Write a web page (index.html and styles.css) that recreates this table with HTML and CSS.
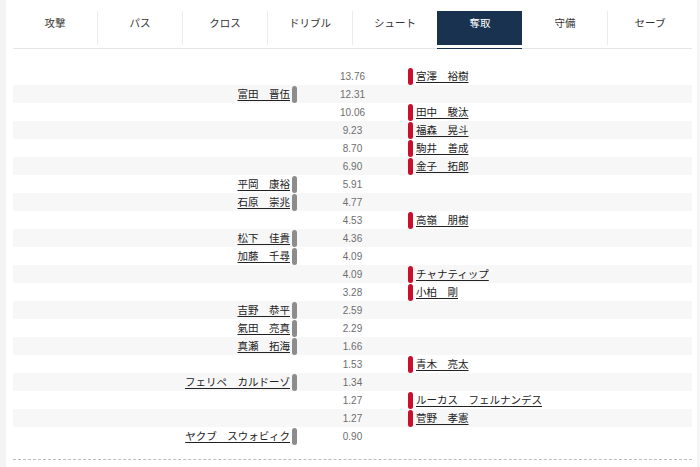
FILE: index.html
```html
<!DOCTYPE html>
<html lang="ja">
<head>
<meta charset="utf-8">
<title>奪取</title>
<link rel="stylesheet" href="styles.css">
</head>
<body>
<div class="page">
  <nav class="tabs">
    <div class="tab">攻撃</div>
    <div class="tab">パス</div>
    <div class="tab">クロス</div>
    <div class="tab">ドリブル</div>
    <div class="tab">シュート</div>
    <div class="tab active">奪取</div>
    <div class="tab">守備</div>
    <div class="tab">セーブ</div>
  </nav>
  <div class="table">
    <div class="row"><div class="home"></div><div class="val">13.76</div><div class="away"><span class="bar"></span><a class="name">宮澤　裕樹</a></div></div>
    <div class="row"><div class="home"><a class="name">富田　晋伍</a><span class="bar"></span></div><div class="val">12.31</div><div class="away"></div></div>
    <div class="row"><div class="home"></div><div class="val">10.06</div><div class="away"><span class="bar"></span><a class="name">田中　駿汰</a></div></div>
    <div class="row"><div class="home"></div><div class="val">9.23</div><div class="away"><span class="bar"></span><a class="name">福森　晃斗</a></div></div>
    <div class="row"><div class="home"></div><div class="val">8.70</div><div class="away"><span class="bar"></span><a class="name">駒井　善成</a></div></div>
    <div class="row"><div class="home"></div><div class="val">6.90</div><div class="away"><span class="bar"></span><a class="name">金子　拓郎</a></div></div>
    <div class="row"><div class="home"><a class="name">平岡　康裕</a><span class="bar"></span></div><div class="val">5.91</div><div class="away"></div></div>
    <div class="row"><div class="home"><a class="name">石原　崇兆</a><span class="bar"></span></div><div class="val">4.77</div><div class="away"></div></div>
    <div class="row"><div class="home"></div><div class="val">4.53</div><div class="away"><span class="bar"></span><a class="name">高嶺　朋樹</a></div></div>
    <div class="row"><div class="home"><a class="name">松下　佳貴</a><span class="bar"></span></div><div class="val">4.36</div><div class="away"></div></div>
    <div class="row"><div class="home"><a class="name">加藤　千尋</a><span class="bar"></span></div><div class="val">4.09</div><div class="away"></div></div>
    <div class="row"><div class="home"></div><div class="val">4.09</div><div class="away"><span class="bar"></span><a class="name">チャナティップ</a></div></div>
    <div class="row"><div class="home"></div><div class="val">3.28</div><div class="away"><span class="bar"></span><a class="name">小柏　剛</a></div></div>
    <div class="row"><div class="home"><a class="name">吉野　恭平</a><span class="bar"></span></div><div class="val">2.59</div><div class="away"></div></div>
    <div class="row"><div class="home"><a class="name">氣田　亮真</a><span class="bar"></span></div><div class="val">2.29</div><div class="away"></div></div>
    <div class="row"><div class="home"><a class="name">真瀬　拓海</a><span class="bar"></span></div><div class="val">1.66</div><div class="away"></div></div>
    <div class="row"><div class="home"></div><div class="val">1.53</div><div class="away"><span class="bar"></span><a class="name">青木　亮太</a></div></div>
    <div class="row"><div class="home"><a class="name">フェリペ　カルドーゾ</a><span class="bar"></span></div><div class="val">1.34</div><div class="away"></div></div>
    <div class="row"><div class="home"></div><div class="val">1.27</div><div class="away"><span class="bar"></span><a class="name">ルーカス　フェルナンデス</a></div></div>
    <div class="row"><div class="home"></div><div class="val">1.27</div><div class="away"><span class="bar"></span><a class="name">菅野　孝憲</a></div></div>
    <div class="row"><div class="home"><a class="name">ヤクブ　スウォビィク</a><span class="bar"></span></div><div class="val">0.90</div><div class="away"></div></div>
  </div>
  <div class="divider"></div>
</div>
</body>
</html>
```
FILE: styles.css
```css
html, body {
  margin: 0;
  padding: 0;
  background: #f4f4f4;
  height: 100%;
}
body {
  font-family: "Noto Sans CJK JP", "Noto Sans", sans-serif;
  color: #222;
}
.page {
  margin-left: 6px;
  width: 679px;
  padding: 11px 5px 0 7px;
  min-height: 456px;
  background: #fff;
}
.tabs {
  display: flex;
  border-bottom: 1px solid #e6e6e6;
  height: 37px;
}
.tab {
  flex: 1;
  height: 34px;
  box-sizing: border-box;
  padding-top: 4px;
  text-align: center;
  font-size: 10.5px;
  line-height: 15px;
  color: #333;
  border-left: 1px solid #ececec;
}
.tab:first-child {
  border-left: none;
}
.tab.active {
  background: #183250;
  color: #fff;
  border-left-color: #183250;
  box-shadow: 0 3px 0 0 #fff, 0 4px 0 0 #183250;
}
.tab.active + .tab {
  border-left-color: #fff;
}
.table {
  margin-top: 18px;
}
.row {
  display: grid;
  grid-template-columns: 1fr 111px 1fr;
  height: 18px;
  align-items: center;
}
.row:nth-child(even) {
  background: #f7f7f7;
}
.home {
  display: flex;
  justify-content: flex-end;
  align-items: center;
  gap: 2px;
  height: 18px;
}
.away {
  display: flex;
  align-items: center;
  gap: 3px;
  height: 18px;
}
.val {
  text-align: center;
  font-family: "Liberation Sans", Arial, sans-serif;
  font-size: 10px;
  color: #6e6e6e;
}
.bar {
  display: block;
  width: 5px;
  height: 17px;
  border-radius: 3px;
}
.home .bar {
  background: #8c8c8c;
}
.away .bar {
  background: #c8102e;
}
.name {
  font-size: 10.5px;
  line-height: 14px;
  color: #222;
  text-decoration: underline;
  text-underline-offset: 2px;
  cursor: pointer;
}
.divider {
  margin-top: 14px;
  border-top: 1px dashed #bdbdbd;
}
```
